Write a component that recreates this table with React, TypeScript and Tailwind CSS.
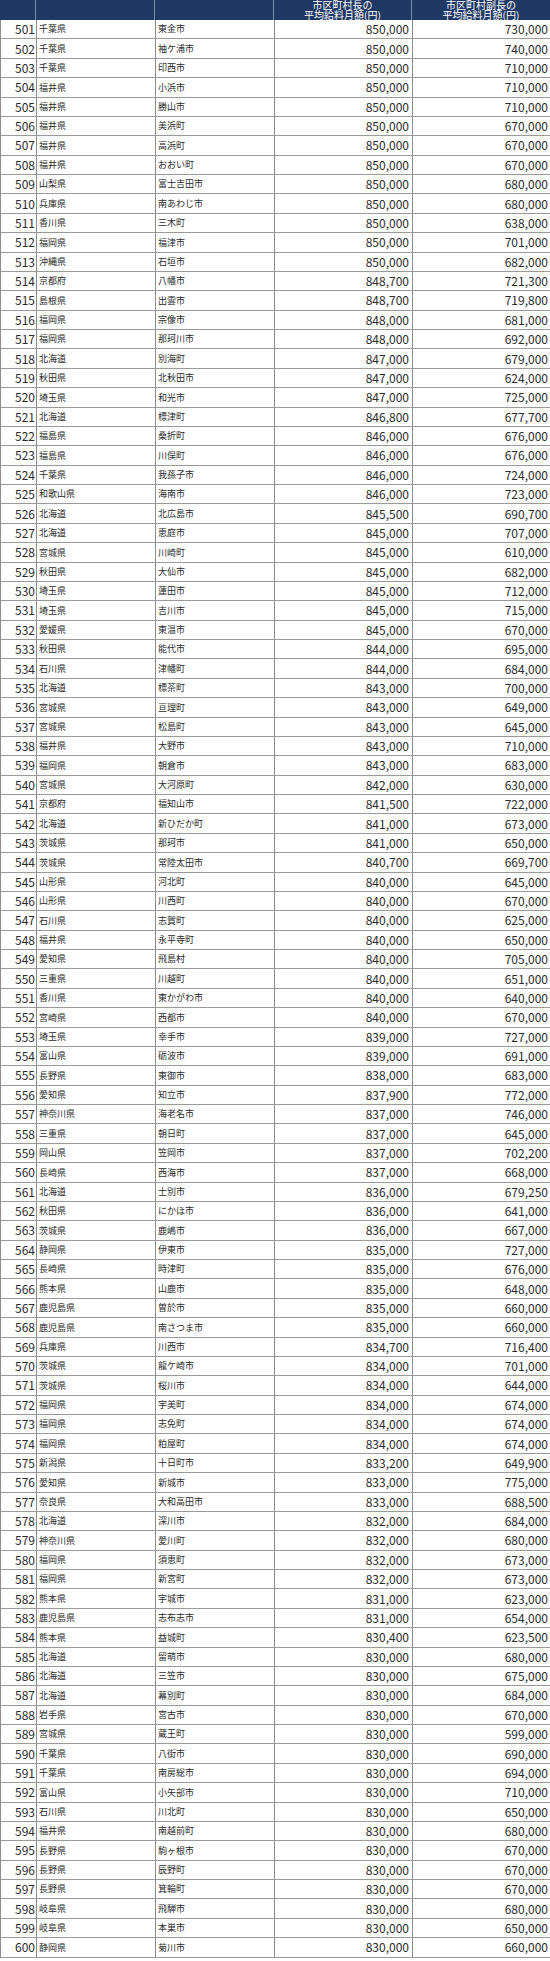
const data = `501 千葉県 東金市 850,000 730,000
502 千葉県 袖ケ浦市 850,000 740,000
503 千葉県 印西市 850,000 710,000
504 福井県 小浜市 850,000 710,000
505 福井県 勝山市 850,000 710,000
506 福井県 美浜町 850,000 670,000
507 福井県 高浜町 850,000 670,000
508 福井県 おおい町 850,000 670,000
509 山梨県 富士吉田市 850,000 680,000
510 兵庫県 南あわじ市 850,000 680,000
511 香川県 三木町 850,000 638,000
512 福岡県 福津市 850,000 701,000
513 沖縄県 石垣市 850,000 682,000
514 京都府 八幡市 848,700 721,300
515 島根県 出雲市 848,700 719,800
516 福岡県 宗像市 848,000 681,000
517 福岡県 那珂川市 848,000 692,000
518 北海道 別海町 847,000 679,000
519 秋田県 北秋田市 847,000 624,000
520 埼玉県 和光市 847,000 725,000
521 北海道 標津町 846,800 677,700
522 福島県 桑折町 846,000 676,000
523 福島県 川俣町 846,000 676,000
524 千葉県 我孫子市 846,000 724,000
525 和歌山県 海南市 846,000 723,000
526 北海道 北広島市 845,500 690,700
527 北海道 恵庭市 845,000 707,000
528 宮城県 川崎町 845,000 610,000
529 秋田県 大仙市 845,000 682,000
530 埼玉県 蓮田市 845,000 712,000
531 埼玉県 吉川市 845,000 715,000
532 愛媛県 東温市 845,000 670,000
533 秋田県 能代市 844,000 695,000
534 石川県 津幡町 844,000 684,000
535 北海道 標茶町 843,000 700,000
536 宮城県 亘理町 843,000 649,000
537 宮城県 松島町 843,000 645,000
538 福井県 大野市 843,000 710,000
539 福岡県 朝倉市 843,000 683,000
540 宮城県 大河原町 842,000 630,000
541 京都府 福知山市 841,500 722,000
542 北海道 新ひだか町 841,000 673,000
543 茨城県 那珂市 841,000 650,000
544 茨城県 常陸太田市 840,700 669,700
545 山形県 河北町 840,000 645,000
546 山形県 川西町 840,000 670,000
547 石川県 志賀町 840,000 625,000
548 福井県 永平寺町 840,000 650,000
549 愛知県 飛島村 840,000 705,000
550 三重県 川越町 840,000 651,000
551 香川県 東かがわ市 840,000 640,000
552 宮崎県 西都市 840,000 670,000
553 埼玉県 幸手市 839,000 727,000
554 富山県 砺波市 839,000 691,000
555 長野県 東御市 838,000 683,000
556 愛知県 知立市 837,900 772,000
557 神奈川県 海老名市 837,000 746,000
558 三重県 朝日町 837,000 645,000
559 岡山県 笠岡市 837,000 702,200
560 長崎県 西海市 837,000 668,000
561 北海道 士別市 836,000 679,250
562 秋田県 にかほ市 836,000 641,000
563 茨城県 鹿嶋市 836,000 667,000
564 静岡県 伊東市 835,000 727,000
565 長崎県 時津町 835,000 676,000
566 熊本県 山鹿市 835,000 648,000
567 鹿児島県 曽於市 835,000 660,000
568 鹿児島県 南さつま市 835,000 660,000
569 兵庫県 川西市 834,700 716,400
570 茨城県 龍ケ崎市 834,000 701,000
571 茨城県 桜川市 834,000 644,000
572 福岡県 宇美町 834,000 674,000
573 福岡県 志免町 834,000 674,000
574 福岡県 粕屋町 834,000 674,000
575 新潟県 十日町市 833,200 649,900
576 愛知県 新城市 833,000 775,000
577 奈良県 大和高田市 833,000 688,500
578 北海道 深川市 832,000 684,000
579 神奈川県 愛川町 832,000 680,000
580 福岡県 須恵町 832,000 673,000
581 福岡県 新宮町 832,000 673,000
582 熊本県 宇城市 831,000 623,000
583 鹿児島県 志布志市 831,000 654,000
584 熊本県 益城町 830,400 623,500
585 北海道 留萌市 830,000 680,000
586 北海道 三笠市 830,000 675,000
587 北海道 幕別町 830,000 684,000
588 岩手県 宮古市 830,000 670,000
589 宮城県 蔵王町 830,000 599,000
590 千葉県 八街市 830,000 690,000
591 千葉県 南房総市 830,000 694,000
592 富山県 小矢部市 830,000 710,000
593 石川県 川北町 830,000 650,000
594 福井県 南越前町 830,000 680,000
595 長野県 駒ヶ根市 830,000 670,000
596 長野県 辰野町 830,000 670,000
597 長野県 箕輪町 830,000 670,000
598 岐阜県 飛騨市 830,000 680,000
599 岐阜県 本巣市 830,000 650,000
600 静岡県 菊川市 830,000 660,000`;

const rows = data.split("\n").map((line) => line.split(" "));

const cols = "grid grid-cols-[36px_119px_119px_138px_138px]";

export default function App() {
  return (
    <div className="w-[550px] bg-white font-['Noto_Sans_CJK_JP','Noto_Sans',sans-serif] text-[#2b2b2b]">
      {/* header */}
      <div className={`${cols} h-[20px] bg-[#1f3864] text-white`}>
        <div className="border-r border-[#7d8aa3]" />
        <div className="border-r border-[#7d8aa3]" />
        <div className="border-r border-[#7d8aa3]" />
        <div className="flex flex-col items-center justify-center border-r border-[#7d8aa3] text-[10px] leading-[10px]">
          <span>市区町村長の</span>
          <span>平均給料月額(円)</span>
        </div>
        <div className="flex flex-col items-center justify-center text-[10px] leading-[10px]">
          <span>市区町村副長の</span>
          <span>平均給料月額(円)</span>
        </div>
      </div>

      {/* rows */}
      <div className="border-l border-[#8c8c8c]">
        {rows.map(([no, pref, city, mayor, deputy]) => (
          <div key={no} className={`${cols} h-[19.38px] border-b border-[#9a9a9a]`}>
            <div className="flex items-center justify-end border-r border-[#8c8c8c] pr-[1px] text-[12px]">{no}</div>
            <div className="flex items-center border-r border-[#8c8c8c] pl-[2px] text-[9px]">{pref}</div>
            <div className="flex items-center border-r border-[#8c8c8c] pl-[2px] text-[9px]">{city}</div>
            <div className="flex items-center justify-end border-r border-[#8c8c8c] pr-[3px] text-[12px]">{mayor}</div>
            <div className="flex items-center justify-end pr-[3px] text-[12px]">{deputy}</div>
          </div>
        ))}
      </div>
    </div>
  );
}
